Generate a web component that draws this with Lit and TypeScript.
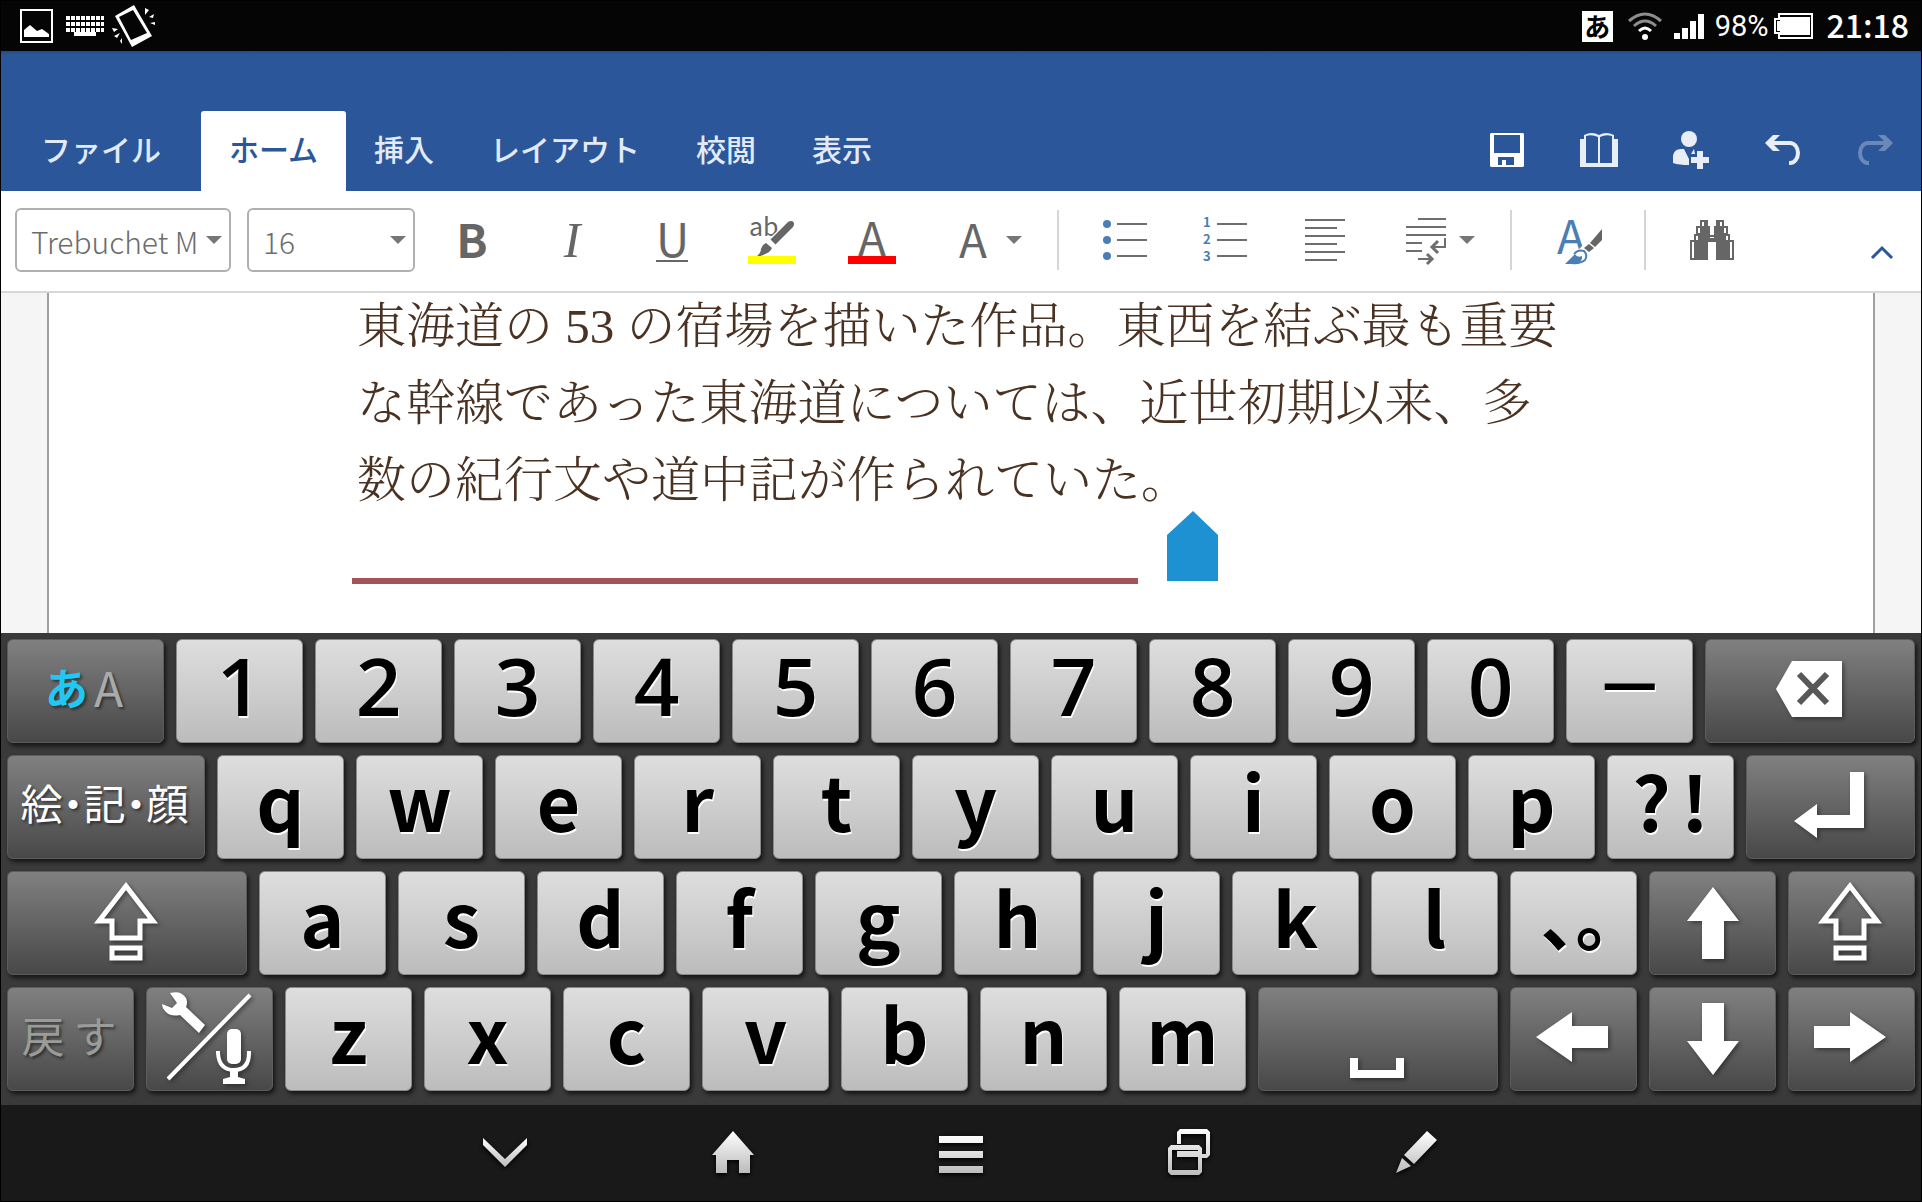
import { LitElement, html, svg, css, nothing, TemplateResult } from "lit";
import { customElement, property, state } from "lit/decorators.js";
import { classMap } from "lit/directives/class-map.js";
import { styleMap } from "lit/directives/style-map.js";

const icon = (w: number, h: number, body: TemplateResult) =>
  html`<svg width=${w} height=${h} viewBox="0 0 ${w} ${h}" aria-hidden="true">${body}</svg>`;

const icons = {
  picture: icon(34, 34, svg`<path d="M1 1H32V33H1Z" fill="none" stroke="#fff" stroke-width="2"/><path d="M4 28V21L10 16L17 22L22 20L29 25V28Z" fill="#fff"/>`),
  keyboard: icon(38, 20, svg`<path d="M0 2H38M0 8H38M0 14H38" stroke="#fff" stroke-width="4" stroke-dasharray="4 1"/><path d="M8 18H30" stroke="#fff" stroke-width="4"/>`),
  phone: icon(44, 42, svg`<path fill="#fff" fill-rule="evenodd" d="M22 0L3 11L20 42L40 31ZM21 5L35 28L19 35L7 12Z"/><path fill="#fff" d="M33 3L37 5L33 10ZM37 12L42 9L41 13ZM38 18L43 17V20ZM0 23L6 24L2 27ZM2 31L8 28L5 33ZM8 36L10 33L10 39Z"/>`),
  wifi: icon(34, 28, svg`<g fill="none" stroke-width="3"><path d="M1 9Q17 -5 33 9M6 14Q17 4 28 14" stroke="#8d8d8d"/><path d="M11 19Q17 13 23 19" stroke="#fff"/></g><circle cx="17" cy="25" r="3" fill="#fff"/>`),
  signal: icon(30, 25, svg`<path fill="#fff" d="M0 19H6V25H0ZM8 14H14V25H8ZM16 7H22V25H16ZM24 0H30V25H24Z"/>`),
  battery: icon(39, 26, svg`<path fill="none" stroke="#fff" stroke-width="2" d="M5 1H38V25H5V20H1V6H5Z"/><path fill="#fff" d="M6 4H36V22H6V18H3V8H6Z"/>`),
  save: icon(34, 34, svg`<path fill="#fff" fill-rule="evenodd" d="M1 0H33L34 1V33L33 34H1L0 33V1ZM4 2V20H30V2ZM8 24V32H12V27H16V32H24V24Z"/>`),
  book: icon(38, 34, svg`<path fill="#e9eef6" fill-rule="evenodd" d="M0 6H4V2Q12 -2 19 2Q26 -2 34 2V6H38V34H0ZM6 3V30H18V4Q12 1 6 3ZM20 4V30H32V3Q26 1 20 4Z"/>`),
  share: icon(36, 38, svg`<g fill="#e9eef6"><circle cx="16" cy="8" r="8"/><path d="M0 32V25Q1 18 8 18H11L16 28V34Q6 34 0 32ZM21 18L22 23H18ZM24 20H30V26H36V32H30V38H24V32H18V26H24Z"/></g>`),
  undo: icon(36, 30, svg`<path fill="#e9eef6" d="M0 8L8 0H15L9 6H25A10 12 0 0 1 25 30H24V26H25A6 8 0 0 0 25 10H9L15 16H8Z"/>`),
  redo: icon(36, 30, svg`<path fill="#6b89b8" d="M36 8L28 0H21L27 6H11A10 12 0 0 0 11 30H12V26H11A6 8 0 0 1 11 10H27L21 16H28Z"/>`),
  caret: icon(16, 8, svg`<path fill="#767676" d="M0 0H16L8 8Z"/>`),
  highlight: icon(48, 48, svg`<text x="1" y="20" class="ab">ab</text><path d="M44 8L25 26" stroke="#fff" stroke-width="10"/><path d="M43 8L25 26" stroke="#666" stroke-width="7"/><circle cx="43" cy="8" r="3" fill="#666"/><path fill="#666" d="M18 27L24 32Q22 38 8 41Q13 37 13 33Q14 29 18 27Z"/><path fill="#ff0" d="M0 40H48V48H0Z"/>`),
  bullets: icon(44, 40, svg`<g fill="#4a7eb4"><circle cx="4" cy="4" r="4"/><circle cx="4" cy="20" r="4"/><circle cx="4" cy="36" r="4"/></g><path d="M14 4H44M14 20H44M14 36H44" stroke="#6e6e6e" stroke-width="2"/>`),
  align: icon(40, 42, svg`<path d="M0 1H40M0 9H32M0 17H40M0 25H32M0 33H40M0 41H32" stroke="#6e6e6e" stroke-width="2"/>`),
  indent: icon(40, 48, svg`<path d="M12 3H40M0 11H40M0 19H40M0 27H16M0 35H16M39 22V31H28M12 43H26" fill="none" stroke="#6e6e6e" stroke-width="2"/><path d="M32 25L26 31L32 37M21 38L26 43L21 48" fill="none" stroke="#6e6e6e" stroke-width="3"/>`),
  styles: icon(48, 48, svg`<g transform="translate(4 4)"><text x="-1" y="34" class="style-a">A</text><path d="M6 45L24 26L34 24L32 44Z" fill="#fff"/><path fill="#666" d="M44 9V20L37 27L32 23ZM31 24L36 28L31 32L26 28Z"/><path fill="none" stroke="#4a7eb4" stroke-width="2" d="M16 34Q20 29 26 31Q30 35 27 40Q22 44 14 43"/><path fill="#4a7eb4" d="M7 44L17 34Q19 38 24 36Q25 43 16 44Z"/></g>`),
  find: icon(44, 40, svg`<path fill="#666" d="M10 0H18V6H20V15H24V6H26V0H34V6H38V14H40V20H44V40H26V22H18V40H0V20H4V14H6V6H10Z"/><path fill="#fff" d="M12 2H14V6H12ZM30 2H32V6H30ZM8 8H10V13H8ZM34 8H36V13H34ZM6 16H8V20H6ZM36 16H38V20H36ZM2 22H4V38H2ZM40 22H42V38H40ZM20 17H24V18H20Z"/>`),
  collapse: icon(22, 14, svg`<path d="M1 12L11 2L21 12" fill="none" stroke="#2b579a" stroke-width="3"/>`),
  backspace: icon(66, 56, svg`<path fill="#fff" d="M0 28L16 0H66V56H16Z"/><path d="M23 13L51 42M51 13L23 42" stroke="#585858" stroke-width="6"/>`),
  enter: icon(70, 66, svg`<path fill="#fff" d="M56 0H70V56H23V66L0 49L23 32V43H56Z"/>`),
  shift: icon(64, 80, svg`<path fill="none" stroke="#fff" stroke-width="5" d="M32 5L5 40H18V57H46V40H59ZM18 67H46V77H18Z"/>`),
  up: icon(56, 76, svg`<path fill="#fff" d="M30 4L56 38H41V76H19V38H4Z"/>`),
  down: icon(56, 76, svg`<path fill="#fff" d="M30 76L56 42H41V4H19V42H4Z"/>`),
  left: icon(72, 50, svg`<path fill="#fff" d="M0 25L36 0V14H72V36H36V50Z"/>`),
  right: icon(72, 50, svg`<path fill="#fff" d="M72 25L36 0V14H0V36H36V50Z"/>`),
  space: icon(54, 20, svg`<path fill="#fff" d="M0 0H8V12H46V0H54V20H0Z"/>`),
  tools: icon(92, 94, svg`<path d="M6 89L88 5" stroke="#fff" stroke-width="4"/><path fill="#fff" d="M0 14L10 18L15 13L8 3Q19 0 24 8Q26 12 24 17L43 35L37 43L18 25Q8 27 3 21Q0 18 0 14Z"/><rect x="65" y="39" width="14" height="35" rx="5" fill="#fff"/><path d="M56 61V63Q57 80 72 80Q87 80 87 63V61" fill="none" stroke="#fff" stroke-width="4"/><path fill="#fff" d="M68 80H76L76 87L83 89V94H61V89L68 87Z"/>`),
};

const metal = (id: string) => svg`<defs><linearGradient id=${id} x1="0" y1="0" x2="0" y2="1"><stop offset="0" stop-color="#fff"/><stop offset="1" stop-color="#bbb"/></linearGradient></defs>`;

const navItems: { label: string; art: TemplateResult }[] = [
  { label: "キーボードを閉じる", art: icon(44, 44, svg`${metal("g")}<path fill="url(#g)" d="M0 8L22 29L44 8V15L22 37L0 15Z"/>`) },
  { label: "ホーム画面", art: icon(44, 44, svg`${metal("g")}<path fill="url(#g)" d="M22 1L43 25H39V43H28V30H16V43H5V25H1Z"/>`) },
  { label: "メニュー", art: icon(44, 44, svg`${metal("g")}<path fill="url(#g)" d="M0 6H44V13H0ZM0 21H44V28H0ZM0 36H44V43H0Z"/>`) },
  { label: "アプリ履歴", art: icon(44, 46, svg`${metal("g")}<path fill="url(#g)" fill-rule="evenodd" d="M13 0H40L43 3V26L40 29H35V25H39V5H14V15H10V3ZM4 16H32L35 19V43L32 46H4L1 43V19ZM5 21V41H31V21ZM10 22H31V28H10Z"/>`) },
  { label: "ペン", art: icon(44, 44, svg`${metal("g")}<path fill="url(#g)" d="M32 1L42 10L19 34L9 25ZM7 28L16 36L1 43Z"/>`) },
];

@customElement("soft-key")
class SoftKey extends LitElement {
  @property({ type: Boolean }) dark = false;
  @property() label = "";

  static styles = css`
    :host { display: flex; min-width: 0; }
    .key {
      flex: 1; min-width: 0; height: 104px; padding: 0; border: 1px solid #8a8a8a; border-radius: 6px;
      display: flex; align-items: center; justify-content: center;
      background: linear-gradient(#dedede, #bcbcbc);
      box-shadow: 2px 3px 4px rgba(0, 0, 0, 0.65);
      font: bold 75px/104px "Noto Sans CJK JP", sans-serif; color: #000;
      text-shadow: 1px 2px 0 #fff; white-space: nowrap;
    }
    .dark {
      padding: 0 3px 4px 0;
      background: linear-gradient(#808080, #484848); border-color: #5c5c5c; color: #fff;
      font: 42px/104px "Noto Sans CJK JP", sans-serif; text-shadow: 2px 2px 3px rgba(0, 0, 0, 0.5);
    }
    ::slotted(svg) { display: block; flex: none; filter: drop-shadow(2px 2px 2px rgba(0, 0, 0, 0.4)); }
  `;

  render() {
    return html`<button type="button" class=${classMap({ key: true, dark: this.dark })} aria-label=${this.label || nothing}><slot></slot></button>`;
  }
}

interface Key { width: number; face: TemplateResult | string; dark?: boolean; label?: string; }

const letter = (text: string): Key => ({ width: 127, face: html`<span class="glyph">${text}</span>` });
const digit = (text: string): Key => ({ width: 127, face: html`<span class="digit">${text}</span>` });
const dark = (width: number, label: string, face: TemplateResult): Key => ({ width, face, dark: true, label });

const rows: Key[][] = [
  [
    dark(157, "文字種切替", html`<span class="word"><span class="kana">あ</span><span class="latin">A</span></span>`),
    ..."1234567890".split("").map(digit),
    { width: 127, face: html`<span class="dash">−</span>` },
    dark(210, "削除", icons.backspace),
  ],
  [
    dark(198, "", html`<span class="word">絵<span class="half">・</span>記<span class="half">・</span>顔</span>`),
    ..."qwertyuiop".split("").map(letter),
    { width: 127, face: html`<span class="glyph pair"><span>?</span><span>!</span></span>` },
    dark(169, "改行", icons.enter),
  ],
  [
    dark(240, "シフト", icons.shift),
    ..."asdfghjkl".split("").map(letter),
    { width: 127, face: html`<span class="stops">、。</span>` },
    dark(127, "上", icons.up),
    dark(127, "シフト", icons.shift),
  ],
  [
    dark(127, "", html`<span class="word undo-word"><span>戻</span><span>す</span></span>`),
    dark(127, "設定・音声入力", icons.tools),
    ..."zxcvbnm".split("").map(letter),
    dark(240, "スペース", html`<span class="space">${icons.space}</span>`),
    dark(127, "左", icons.left),
    dark(127, "下", icons.down),
    dark(127, "右", icons.right),
  ],
];

@customElement("app-root")
class AppRoot extends LitElement {
  @state() private tab = "ホーム";

  static styles = css`
    :host {
      display: flex; flex-direction: column; box-sizing: border-box; min-height: 100vh; padding: 1px;
      background: #000; font-family: "Noto Sans CJK JP", sans-serif;
    }
    * { box-sizing: border-box; }
    svg { display: block; flex: none; overflow: visible; }
    button { border: 0; padding: 0; background: none; font: inherit; color: inherit; }

    .status { display: flex; align-items: center; justify-content: space-between; height: 50px; padding: 0 12px 0 19px; background: #050505; color: #fff; }
    .status-side { display: flex; align-items: center; }
    .notices { gap: 12px; padding-bottom: 1px; }
    .notices svg:last-child { margin-left: -4px; }
    .ime { width: 31px; height: 31px; margin-right: 15px; background: #fff; color: #000; font: bold 26px/30px "Noto Sans CJK JP", sans-serif; text-align: center; }
    .signal { margin: 0 11px 0 12px; }
    .percent { font: 29px/40px Roboto, sans-serif; margin-right: 5px; }
    .clock { font: 500 32px/40px "Noto Sans CJK JP", sans-serif; margin-left: 14px; padding-bottom: 4px; }

    .header { display: flex; align-items: flex-end; justify-content: space-between; height: 140px; background: linear-gradient(#234a86, #2b579a 4px); }
    .tabs, .actions { display: flex; }
    .tab { height: 80px; padding: 0 28px 6px; border-radius: 3px 3px 0 0; font-size: 30px; font-weight: 500; color: #e2eaf7; white-space: nowrap; }
    .tab:first-child { padding: 0 40px 6px; }
    .selected { background: #fff; color: #2b579a; }
    .action { width: 92px; height: 80px; display: flex; align-items: center; justify-content: center; padding-bottom: 2px; }

    .toolbar { display: flex; align-items: center; height: 102px; padding: 0 0 2px 14px; background: #fff; border-bottom: 2px solid #d6d8d7; color: #666; }
    .picker { position: relative; height: 64px; margin-right: 16px; flex: none; }
    .picker select { width: 100%; height: 64px; appearance: none; border: 2px solid #b0b0b0; border-radius: 6px; background: #fff; padding: 2px 24px 0 14px; color: #6c6c6c; font: 300 30px/58px "Noto Sans CJK JP", sans-serif; }
    .picker svg { position: absolute; right: 9px; top: 28px; }
    .family { width: 216px; }
    .size { width: 168px; margin-right: 7px; }
    .tool { width: 100px; height: 80px; flex: none; display: flex; align-items: center; justify-content: center; }
    .split { width: 134px; height: 80px; flex: none; display: flex; align-items: center; justify-content: flex-start; padding-left: 31px; gap: 13px; }
    .letter { font-size: 46px; height: 56px; line-height: 52px; }
    .bold { font-weight: 700; }
    .italic { font: italic 50px/56px "Liberation Serif", serif; }
    .lined { width: 32px; height: 44px; line-height: 38px; border-bottom: 2px solid #666; text-align: center; }
    .boxed { width: 48px; line-height: 40px; height: 48px; border-bottom: 8px solid #f00; text-align: center; }
    .width40 { width: 40px; text-align: center; }
    .divider { width: 2px; height: 60px; flex: none; background: #d6d6d6; margin: 0 16px 0 1px; }
    .divider.even { margin-left: 16px; }
    .collapse { width: 78px; height: 80px; margin-left: auto; display: flex; justify-content: center; align-items: flex-end; padding-bottom: 20px; color: #2b579a; }
    .ab { font: 25px "Noto Sans CJK JP", sans-serif; fill: #666; }
    .style-a { font: 46px "Noto Sans CJK JP", sans-serif; fill: #4a7eb4; }
    .num { font: bold 13px "Noto Sans CJK JP", sans-serif; fill: #4a7eb4; }

    .canvas { flex: 1; min-height: 340px; padding: 0 46px; background: #f5f5f5; display: flex; }
    .page { position: relative; flex: 1; min-width: 0; background: #fff; border: solid #a0a0a0; border-width: 0 2px; padding-left: 308px; }
    .text { margin: -5px 0 0; font: 300 49px/77px "Liberation Serif", "Noto Serif CJK JP", "Noto Sans CJK JP", serif; color: #4a3223; white-space: nowrap; }
    .rule { width: 786px; height: 6px; margin: 59px 0 0 -5px; border: 0; background: #a35458; }
    .handle { position: absolute; left: 1118px; top: 218px; }

    .keyboard { display: flex; flex-direction: column; gap: 12px; padding: 6px 6px 14px; background: #3a3a3a; }
    .row { display: flex; gap: 12px; }
    .glyph { line-height: 90px; height: 104px; }
    .digit { font-family: "Open Sans", sans-serif; font-weight: 600; font-size: 80px; line-height: 92px; height: 104px; }
    .pair { display: flex; gap: 10px; }
    .dash { font-family: "DejaVu Sans", sans-serif; font-weight: 400; font-size: 80px; line-height: 92px; height: 104px; }
    .stops { font-size: 70px; font-feature-settings: "halt"; height: 104px; line-height: 90px; padding-left: 4px; }
    .half { font-feature-settings: "halt"; }
    .word { display: flex; height: 104px; line-height: 98px; }
    .kana { font-weight: 700; color: #22c8f5; font-size: 43px; }
    .latin { font-size: 48px; color: #aaa; margin-left: 6px; }
    .undo-word { gap: 9px; color: #999c99; font-size: 43px; }
    .space { padding-top: 61px; }
    .space svg { filter: drop-shadow(2px 2px 2px rgba(0, 0, 0, 0.4)); }

    .nav { display: flex; justify-content: center; height: 96px; background: #191919; }
    .nav-button { width: 228px; display: flex; align-items: center; justify-content: center; padding-bottom: 2px; }
    .nav-button svg { filter: drop-shadow(0 2px 2px #000); }
  `;

  private renderStatus() {
    return html`<div class="status">
      <div class="status-side notices">${icons.picture}${icons.keyboard}${icons.phone}</div>
      <div class="status-side">
        <span class="ime">あ</span>${icons.wifi}
        <span class="signal">${icons.signal}</span>
        <span class="percent">98%</span>${icons.battery}
        <span class="clock">21:18</span>
      </div>
    </div>`;
  }

  private renderHeader() {
    const tabs = ["ファイル", "ホーム", "挿入", "レイアウト", "校閲", "表示"];
    const actions: [string, TemplateResult][] = [
      ["保存", icons.save], ["閲覧表示", icons.book], ["共有", icons.share], ["元に戻す", icons.undo], ["やり直し", icons.redo],
    ];
    return html`<header class="header">
      <nav class="tabs">
        ${tabs.map((t) => html`<button type="button" class=${classMap({ tab: true, selected: t === this.tab })} @click=${() => (this.tab = t)}>${t}</button>`)}
      </nav>
      <div class="actions">
        ${actions.map(([label, art]) => html`<button type="button" class="action" aria-label=${label}>${art}</button>`)}
      </div>
    </header>`;
  }

  private renderToolbar() {
    const numbered = icon(44, 44, svg`<text x="0" y="9" class="num">1</text><text x="0" y="26" class="num">2</text><text x="0" y="43" class="num">3</text><path d="M14 6H44M14 22H44M14 38H44" stroke="#6e6e6e" stroke-width="2"/>`);
    return html`<div class="toolbar">
      <div class="picker family"><select aria-label="フォント"><option>Trebuchet M</option></select>${icons.caret}</div>
      <div class="picker size"><select aria-label="フォント サイズ"><option>16</option></select>${icons.caret}</div>
      <button type="button" class="tool" aria-label="太字"><span class="letter bold">B</span></button>
      <button type="button" class="tool" aria-label="斜体"><span class="italic">I</span></button>
      <button type="button" class="tool" aria-label="下線"><span class="letter lined">U</span></button>
      <button type="button" class="tool" aria-label="蛍光ペン">${icons.highlight}</button>
      <button type="button" class="tool" aria-label="フォントの色"><span class="letter boxed">A</span></button>
      <button type="button" class="split" aria-label="文字の書式"><span class="letter width40">A</span>${icons.caret}</button>
      <span class="divider"></span>
      <button type="button" class="tool" aria-label="箇条書き">${icons.bullets}</button>
      <button type="button" class="tool" aria-label="段落番号">${numbered}</button>
      <button type="button" class="tool" aria-label="左揃え">${icons.align}</button>
      <button type="button" class="split" aria-label="段落の書式">${icons.indent}${icons.caret}</button>
      <span class="divider"></span>
      <button type="button" class="tool" aria-label="スタイル">${icons.styles}</button>
      <span class="divider even"></span>
      <button type="button" class="tool" aria-label="検索">${icons.find}</button>
      <button type="button" class="collapse" aria-label="リボンを閉じる">${icons.collapse}</button>
    </div>`;
  }

  private renderDocument() {
    return html`<main class="canvas">
      <article class="page">
        <p class="text">東海道の 53 の宿場を描いた作品。東西を結ぶ最も重要<br />な幹線であった東海道については、近世初期以来、多<br />数の紀行文や道中記が作られていた。</p>
        <hr class="rule" />
        <span class="handle">${icon(51, 70, svg`<path fill="#1e91d2" d="M26 0L51 24V70H0V24Z"/>`)}</span>
      </article>
    </main>`;
  }

  private renderKeyboard() {
    return html`<section class="keyboard">
      ${rows.map((row) => html`<div class="row">
        ${row.map((k) => html`<soft-key style=${styleMap({ flex: `${k.width} 1 0` })} ?dark=${!!k.dark} .label=${k.label ?? ""}>${k.face}</soft-key>`)}
      </div>`)}
    </section>`;
  }

  render() {
    return html`
      ${this.renderStatus()}${this.renderHeader()}${this.renderToolbar()}${this.renderDocument()}${this.renderKeyboard()}
      <nav class="nav">
        ${navItems.map((n) => html`<button type="button" class="nav-button" aria-label=${n.label}>${n.art}</button>`)}
      </nav>`;
  }
}
